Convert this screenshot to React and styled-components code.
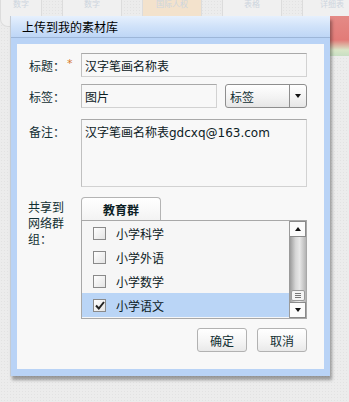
import React from 'react';
import styled, {createGlobalStyle} from 'styled-components';

const FONT = `"DejaVu Sans", "Noto Sans CJK SC", sans-serif`;
const INK = '#122f33';

const GlobalStyle = createGlobalStyle`
  html, body {
    margin: 0;
    padding: 0;
  }
  body {
    width: 349px;
    height: 402px;
    overflow: hidden;
    background: #ebebeb;
    font-family: ${FONT};
    font-size: 12px;
    color: ${INK};
  }
`;

// page behind the dialog (faded)
const Page = styled.div`
  position: relative;
  width: 349px;
  height: 402px;
  background-color: #ececec;
  background-image: radial-gradient(#e2e2e2 0.6px, transparent 0.7px);
  background-size: 3px 3px;
  overflow: hidden;
`;

const BackTabs = styled.div`
  display: flex;
  gap: 20px;
`;

const BackTab = styled.div`
  width: ${({w}) => w || 58}px;
  flex: 0 0 auto;
  height: 26px;
  border: 1px solid #dcdcdc;
  border-top: none;
  border-radius: 0 0 8px 8px;
  background: ${({warm}) => (warm ? '#f3e2cc' : '#f0f0f0')};
  color: #cdd5de;
  font-size: 8px;
  text-align: center;
  line-height: 10px;
  overflow: hidden;
`;

const BackPicture = styled.div`
  position: absolute;
  right: 0;
  top: 16px;
  width: 19px;
  height: 40px;
  background: linear-gradient(180deg, #e48a86 0%, #e27b78 60%, #d9e6c8 85%, #c8dfc3 100%);
`;

const Dialog = styled.div`
  position: absolute;
  left: 10px;
  top: 16px;
  width: 320px;
  background: #b9d3f6;
  box-shadow: 2px 4px 3px rgba(0, 0, 0, 0.35);
  border-left: 1px solid #c4cbd4;
  box-sizing: border-box;
`;

const TitleBar = styled.div`
  height: 21px;
  display: flex;
  align-items: center;
  padding-left: 11px;
  background: linear-gradient(180deg, #e6f0fd 0%, #d0e2f9 50%, #bed6f6 100%);
  border-bottom: 1px solid #9db6d8;
  color: #000;
  font-size: 12px;
`;

const Body = styled.div`
  margin: 6px 6px 7px 6px;
  background: #f8f8f8;
  padding: 9px 17px 16px 12px;
  display: flex;
  flex-direction: column;
`;

const Form = styled.div`
  display: grid;
  grid-template-columns: 52px 1fr;
  align-items: start;
`;

const Label = styled.div`
  height: 24px;
  display: flex;
  align-items: center;
  white-space: nowrap;
  margin-top: ${({top}) => top || 0}px;
  color: ${INK};
`;

const MultiLabel = styled.div`
  margin-top: ${({top}) => top || 0}px;
  line-height: 16px;
  margin-left: -1px;
  color: ${INK};
`;

const Star = styled.span`
  color: #d6782c;
  margin-left: 2px;
  font-size: 11px;
  position: relative;
  top: -2px;
`;

const Field = styled.div`
  margin-top: ${({top}) => top || 0}px;
  display: flex;
  gap: 8px;
`;

const TextBox = styled.div`
  flex: ${({w}) => (w ? `0 0 ${w}px` : '1')};
  height: ${({h}) => h || 24}px;
  box-sizing: border-box;
  border: 1px solid #d2d2d2;
  border-top-color: #a9a9a9;
  border-left-color: #c0c0c0;
  background: #f8f8f8;
  padding: ${({multi}) => (multi ? '3px 3px' : '0 3px')};
  display: flex;
  align-items: ${({multi}) => (multi ? 'flex-start' : 'center')};
  color: #0c2024;
  white-space: nowrap;
  overflow: hidden;
`;

const Select = styled.div`
  flex: 1;
  height: 24px;
  box-sizing: border-box;
  border: 1px solid #8e8e8e;
  border-radius: 3px;
  background: linear-gradient(180deg, #ffffff 0%, #f2f2f2 60%, #e6e6e6 100%);
  display: flex;
  align-items: stretch;
`;

const SelectText = styled.div`
  flex: 1;
  display: flex;
  align-items: center;
  padding-left: 4px;
`;

const SelectArrow = styled.div`
  width: 16px;
  border-left: 1px solid #8e8e8e;
  display: flex;
  align-items: center;
  justify-content: center;
`;

const Triangle = styled.span`
  width: 0;
  height: 0;
  border-left: 3.5px solid transparent;
  border-right: 3.5px solid transparent;
  ${({up}) => (up ? 'border-bottom: 4px solid #111;' : 'border-top: 4px solid #111;')}
`;

const Share = styled.div`
  margin-top: 10px;
  display: flex;
  flex-direction: column;
`;

const Tab = styled.div`
  width: 80px;
  height: 23px;
  box-sizing: border-box;
  border: 1px solid #b4b4b4;
  border-bottom: none;
  border-radius: 4px 4px 0 0;
  background: linear-gradient(180deg, #ffffff 0%, #f3f3f3 100%);
  font-weight: bold;
  display: flex;
  align-items: center;
  justify-content: center;
  color: #0c2024;
`;

const ListBox = styled.div`
  height: 99px;
  box-sizing: border-box;
  border: 1px solid #a8a8a8;
  display: flex;
  background: #f6f6f6;
`;

const Items = styled.div`
  flex: 1;
  display: flex;
  flex-direction: column;
  overflow: hidden;
`;

const Item = styled.div`
  height: 24px;
  flex: 0 0 24px;
  display: flex;
  align-items: center;
  padding-left: 11px;
  gap: 10px;
  background: ${({selected}) => (selected ? '#bad5f6' : 'transparent')};
  color: #0c2024;
`;

const Box = styled.span`
  width: 13px;
  height: 13px;
  box-sizing: border-box;
  border: 1px solid #8a8a8a;
  background: linear-gradient(135deg, #ffffff 0%, #e4e4e4 100%);
  display: flex;
  align-items: center;
  justify-content: center;
`;

const ScrollBar = styled.div`
  width: 16px;
  border-left: 1px solid #9a9a9a;
  display: flex;
  flex-direction: column;
`;

const ScrollButton = styled.div`
  height: 16px;
  box-sizing: border-box;
  background: #fbfbfb;
  border: 1px solid #8a8a8a;
  border-left: none;
  display: flex;
  align-items: center;
  justify-content: center;
`;

const Track = styled.div`
  flex: 1;
  background: linear-gradient(90deg, #9c9c9c 0%, #d6d6d6 35%, #e8e8e8 60%, #b4b4b4 100%);
  display: flex;
  flex-direction: column;
  justify-content: flex-end;
`;

const Thumb = styled.div`
  height: 9px;
  margin: 0 1px 1px 1px;
  background: #f4f4f4;
  border: 1px solid #9a9a9a;
  border-radius: 2px;
  display: flex;
  flex-direction: column;
  justify-content: center;
  gap: 1px;
  padding: 0 3px;
`;

const Grip = styled.span`
  height: 1px;
  background: #777;
`;

const Buttons = styled.div`
  margin-top: 9px;
  margin-bottom: 1px;
  display: flex;
  justify-content: flex-end;
  gap: 10px;
`;

const Button = styled.button`
  width: 50px;
  height: 24px;
  border: 1px solid #b2b2b2;
  border-radius: 3px;
  background: linear-gradient(180deg, #ffffff 0%, #f4f4f4 60%, #e9e9e9 100%);
  font-family: ${FONT};
  font-size: 12px;
  color: ${INK};
  padding: 0;
  cursor: pointer;
`;

const groups = [
  {name: '小学科学', checked: false},
  {name: '小学外语', checked: false},
  {name: '小学数学', checked: false},
  {name: '小学语文', checked: true},
];

export default function App() {
  return (
    <>
      <GlobalStyle />
      <Page>
        <BackTabs>
          <BackTab w={40}>数字</BackTab>
          <BackTab>数字</BackTab>
          <BackTab warm>国际人权</BackTab>
          <BackTab>表格</BackTab>
          <BackTab>详细表</BackTab>
        </BackTabs>
        <BackPicture />

        <Dialog>
          <TitleBar>上传到我的素材库</TitleBar>
          <Body>
            <Form>
              <Label>
                标题：<Star>*</Star>
              </Label>
              <Field>
                <TextBox>汉字笔画名称表</TextBox>
              </Field>

              <Label top={7}>标签：</Label>
              <Field top={7}>
                <TextBox w={136}>图片</TextBox>
                <Select>
                  <SelectText>标签</SelectText>
                  <SelectArrow>
                    <Triangle />
                  </SelectArrow>
                </Select>
              </Field>

              <Label top={11}>备注：</Label>
              <Field top={11}>
                <TextBox h={68} multi>
                  汉字笔画名称表gdcxq@163.com
                </TextBox>
              </Field>

              <MultiLabel top={13}>
                共享到
                <br />
                网络群
                <br />
                组：
              </MultiLabel>
              <Share>
                <Tab>教育群</Tab>
                <ListBox>
                  <Items>
                    {groups.map((g) => (
                      <Item key={g.name} selected={g.checked}>
                        <Box>
                          {g.checked && (
                            <svg width="10" height="9" viewBox="0 0 10 9">
                              <path d="M1 4.5 L3.8 7.5 L9 1" fill="none" stroke="#222" strokeWidth="2" />
                            </svg>
                          )}
                        </Box>
                        {g.name}
                      </Item>
                    ))}
                  </Items>
                  <ScrollBar>
                    <ScrollButton>
                      <Triangle up />
                    </ScrollButton>
                    <Track>
                      <Thumb>
                        <Grip />
                        <Grip />
                        <Grip />
                      </Thumb>
                    </Track>
                    <ScrollButton>
                      <Triangle />
                    </ScrollButton>
                  </ScrollBar>
                </ListBox>
              </Share>
            </Form>
            <Buttons>
              <Button>确定</Button>
              <Button>取消</Button>
            </Buttons>
          </Body>
        </Dialog>
      </Page>
    </>
  );
}
